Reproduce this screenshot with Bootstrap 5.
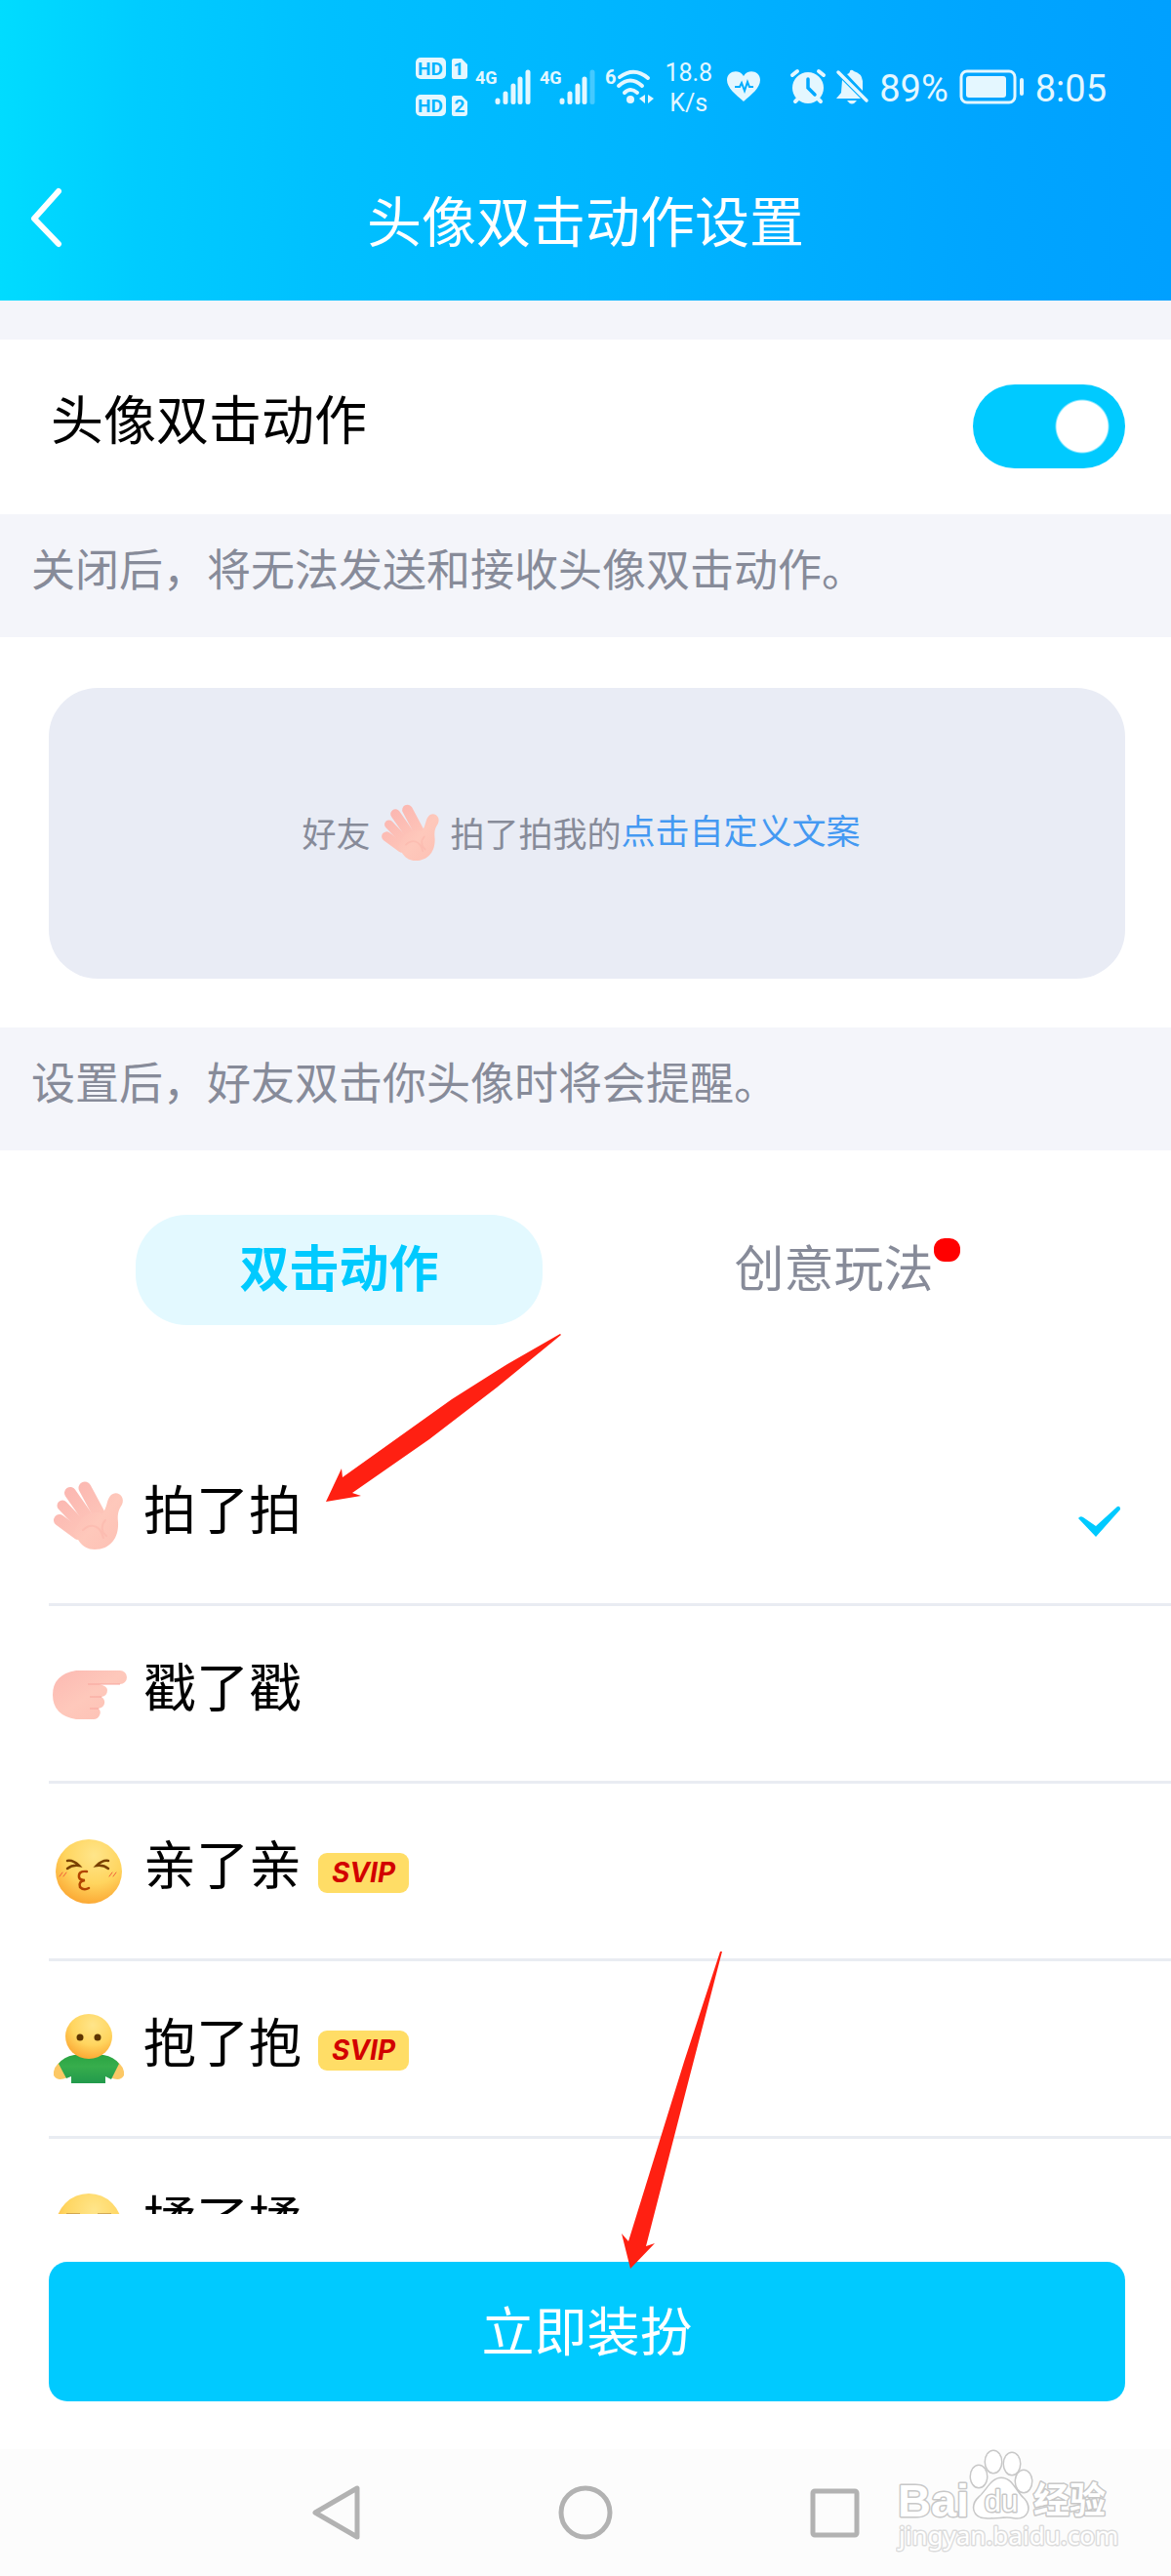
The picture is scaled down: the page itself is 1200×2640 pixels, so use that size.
<!DOCTYPE html>
<html lang="zh-CN">
<head>
<meta charset="utf-8">
<meta name="viewport" content="width=device-width, initial-scale=1">
<title>头像双击动作设置</title>
<link href="https://cdn.jsdelivr.net/npm/bootstrap@5.3.0/dist/css/bootstrap.min.css" rel="stylesheet">
<style>
  body { font-family: Roboto, "Noto Sans CJK SC", sans-serif; color: #000; background: #fff; }
  .app-head { background: linear-gradient(91deg, #00dcff 0%, #00ccff 12%, #00c0ff 28%, #00b4ff 56%, #00a5ff 84%, #00a0ff 100%); color: #fff; padding-bottom: 36px; }
  .status-row { height: 176px; padding: 2px 66px 0 0; gap: 11px; color: #e4f7ff; font-size: 38px; line-height: 48px; }
  .status-row svg { flex: none; overflow: visible; }
  .status-text { padding-top: 4px; }
  .net-speed { padding-top: 2px; font-size: 25px; line-height: 31px; }
  .title-row { height: 96px; }
  .title-row h1 { padding-top: 9px; font-size: 56px; line-height: 60px; font-weight: 400; }
  .back-link { left: 30px; top: 16px; line-height: 0; }
  .soft-band { background: #f4f5fa; }
  .spacer-band { height: 40px; }
  .note-band { padding: 32px 32px 40px; font-size: 45px; line-height: 54px; color: #878b99; }
  .setting-row { padding: 46px 47px 47px 52px; }
  .item-label { font-size: 54px; line-height: 64px; padding-bottom: 8px; }
  .form-check-input.big-switch { width: 156px; height: 86px; margin: 0; border: 0; border-radius: 43px; background: #ccc radial-gradient(circle at 43px 43px, #fff 26px, transparent 28px); box-shadow: none; }
  .form-check-input.big-switch:checked { background: #00caff radial-gradient(circle at 112px 43px, #fff 26px, transparent 28px); }
  .preview-wrap { padding: 52px 47px 50px 50px; }
  .preview-box { height: 298px; border-radius: 50px; background: #e9ecf5; color: #878b99; font-size: 35px; line-height: 44px; padding-right: 12px; }
  .preview-box span { padding-top: 6px; }
  .preview-box a { color: #4499f2; }
  .preview-hand { width: 82px; height: 82px; }
  .tab-strip { padding: 66px 137px 106px 139px; }
  .tab-pill { width: 417px; height: 113px; border: 0; border-radius: 52px; background: transparent; color: #878b99; font-size: 51px; line-height: 60px; padding: 0; }
  .tab-pill.active { background: #e3f9ff; color: #00caff; font-weight: 700; }
  .tab-dot { left: 100%; top: -3px; width: 27px; height: 24px; border-radius: 11px; background: #f00; }
  .action-list { height: 805px; margin-left: 50px; overflow: hidden; }
  .action-row { height: 182px; border-bottom: 3px solid #e9ecf2; padding-right: 51px; gap: 17px; cursor: pointer; }
  .action-row svg { flex: none; }
  .svip { width: 93px; height: 41px; margin-top: 3px; border-radius: 9px; background: #ffdd66; color: #d20000; font: italic 700 28px/41px Inter, sans-serif; }
  .tick { display: none; margin-top: 12px; }
  .action-row input:checked ~ .tick { display: block; }
  .apply-wrap { padding: 49px 47px 49px 50px; }
  .apply-btn { height: 143px; border: 0; border-radius: 19px; background: #00caff; color: #fff; font-size: 54px; line-height: 64px; padding: 4px 0 0; }
  .nav-keys { height: 130px; background: #fcfcfc; gap: 195px; }
  .nav-keys button { width: 60px; height: 60px; padding: 0; border: 0; background: none; line-height: 0; }
  .watermark { right: 52px; top: -2px; }
  .pointer { pointer-events: none; }
  .pointer-a { left: 330px; top: 184px; }
  .pointer-b { left: 634px; top: 816px; }
</style>
<script src="https://cdn.jsdelivr.net/npm/bootstrap@5.3.0/dist/js/bootstrap.bundle.min.js"></script>
</head>
<body>

<svg width="0" height="0" class="position-absolute" aria-hidden="true">
  <defs>
    <linearGradient id="skin" x1="0" y1="0" x2="1" y2="1"><stop offset="0" stop-color="#fcb9b2"/><stop offset=".5" stop-color="#fec8bb"/><stop offset="1" stop-color="#fdc0b4"/></linearGradient>
    <linearGradient id="finger" gradientUnits="userSpaceOnUse" x1="20" y1="20" x2="60" y2="65"><stop offset="0" stop-color="#fbb5b0"/><stop offset="1" stop-color="#fec7ba"/></linearGradient>
    <radialGradient id="face" cx=".58" cy=".25" r=".8"><stop offset="0" stop-color="#ffe58a"/><stop offset=".55" stop-color="#ffd55f"/><stop offset="1" stop-color="#fba32f"/></radialGradient>
    <linearGradient id="shirt" x1="0" y1="0" x2="0" y2="1"><stop offset="0" stop-color="#2aa443"/><stop offset=".4" stop-color="#37ad4c"/><stop offset="1" stop-color="#229a4c"/></linearGradient>
    <symbol id="hand" viewBox="10 10 80 80">
      <g stroke="url(#finger)" stroke-linecap="round" fill="none">
        <path d="M21 54 40 68" stroke-width="12"/>
        <path d="M24 39 46 62" stroke-width="11"/>
        <path d="M32 26 53 56" stroke-width="12"/>
        <path d="M47 21 62 49" stroke-width="13"/>
      </g>
      <path d="M35 67C40 72 43 84 57 84C73 84 82 72 81 56C80 46 82 43 85 38C89 29 79 22 73 29C69 34 70 41 65 47C58 45 50 46 43 53Z" fill="url(#skin)"/>
      <path d="M45 64C54 56 63 60 66 72M68 54C64 58 63 65 69 70" fill="none" stroke="#f9aea5" stroke-width="2" opacity=".4" stroke-linecap="round"/>
    </symbol>
  </defs>
</svg>

<header class="app-head">
  <div class="status-row d-flex align-items-center justify-content-end">
    <svg width="52" height="60" viewBox="0 0 52 60" fill="#e4f7ff" aria-label="HD 1 HD 2">
      <rect width="31" height="22" rx="5"/><rect y="38" width="31" height="22" rx="5"/>
      <path d="M39 1h8l6 6v12a3 3 0 0 1-3 3H39a2 2 0 0 1-2-2V3a2 2 0 0 1 2-2ZM39 39h8l6 6v12a3 3 0 0 1-3 3H39a2 2 0 0 1-2-2V41a2 2 0 0 1 2-2Z"/>
      <g fill="#00b4ff" font-family="Roboto, sans-serif" font-weight="700" font-size="19" text-anchor="middle">
        <text x="15" y="18">HD</text><text x="15" y="56">HD</text><text x="44" y="18">1</text><text x="45" y="56">2</text>
      </g>
    </svg>
    <svg width="55" height="36" viewBox="0 0 55 36" fill="#e4f7ff" stroke="#e4f7ff" aria-label="4G">
      <text x="-2" y="15" font-family="Roboto, sans-serif" font-weight="700" font-size="18" stroke="none">4G</text>
      <path d="M21 32v1.500M29 25v8.500M37 17v16.500M44 10v23.500M52 3v30.500" stroke-width="5" stroke-linecap="round"/>
    </svg>
    <svg width="55" height="36" viewBox="0 0 55 36" fill="#e4f7ff" stroke="#e4f7ff" aria-label="4G">
      <text x="-2" y="15" font-family="Roboto, sans-serif" font-weight="700" font-size="18" stroke="none">4G</text>
      <path d="M21 32v1.500M29 25v8.500M37 17v16.500M44 10v23.500" stroke-width="5" stroke-linecap="round"/>
      <path d="M52 3v30.500" stroke-width="5" stroke-linecap="round" opacity=".3"/>
    </svg>
    <svg width="49" height="36" viewBox="0 0 49 36" fill="#e4f7ff" aria-label="Wi-Fi 6">
      <text x="-1" y="15" font-family="Roboto, sans-serif" font-weight="700" font-size="20">6</text>
      <g fill="none" stroke="#e4f7ff" stroke-width="4" stroke-linecap="round"><path d="M14 8Q29-3 43 9M13 17Q25 6 37 17M19 24Q25 18 32 24"/></g>
      <circle cx="25" cy="31" r="4"/><path d="M40 26v9l-6-5ZM43 26v9l6-5Z"/>
    </svg>
    <div class="net-speed text-center">18.8<br>K/s</div>
    <svg class="mx-1" width="34" height="32" viewBox="0 0 34 32" aria-hidden="true">
      <path d="M17 31C9 24 0 17 0 9C0 0 12-3 17 5C22-3 34 0 34 9C34 17 25 24 17 31Z" fill="#e4f7ff"/>
      <path d="M8 16h5l2-4 3 8 3-9 2 5h4" fill="none" stroke="#00adff" stroke-width="2"/>
    </svg>
    <svg class="ms-3" width="36" height="36" viewBox="0 0 36 36" aria-hidden="true">
      <circle cx="18" cy="19" r="16" fill="#e4f7ff"/>
      <path d="M2 6l5-4M34 6l-5-4M5 33l5-5M31 33l-5-5" stroke="#e4f7ff" stroke-width="4" stroke-linecap="round"/>
      <path d="M18 10v9l7 7" stroke="#00a8ff" stroke-width="3.500" fill="none" stroke-linecap="round"/>
    </svg>
    <svg width="33" height="36" viewBox="0 0 33 36" aria-hidden="true">
      <path d="M11 5Q14 4 14 1.500Q16 0 18 2Q26 4 27 12V22ZM6 11 25 30H0L5 24ZM11 32h10q-5 7-10 0Z" fill="#e4f7ff"/>
      <path d="M2 3 31 32" stroke="#e4f7ff" stroke-width="3.500" stroke-linecap="round"/>
    </svg>
    <span class="status-text">89%</span>
    <svg width="67" height="36" viewBox="0 0 67 36" aria-hidden="true">
      <rect x="2" y="2" width="55" height="32" rx="6" fill="none" stroke="#e4f7ff" stroke-width="3"/>
      <rect x="7" y="7" width="41" height="22" rx="3" fill="#e4f7ff"/><rect x="62" y="9" width="4" height="18" rx="2" fill="#e4f7ff"/>
    </svg>
    <time class="status-text">8:05</time>
  </div>
  <div class="title-row position-relative d-flex align-items-center justify-content-center">
    <a href="#" class="back-link position-absolute" aria-label="返回">
      <svg width="36" height="62" viewBox="0 0 36 62"><path d="M30 4 5 32 30 58" fill="none" stroke="#fff" stroke-width="6" stroke-linecap="round" stroke-linejoin="round"/></svg>
    </a>
    <h1 class="mb-0">头像双击动作设置</h1>
  </div>
</header>

<main>
  <div class="soft-band spacer-band"></div>
  <section class="setting-row d-flex align-items-center justify-content-between">
    <label class="item-label" for="tapSwitch">头像双击动作</label>
    <input class="form-check-input big-switch" type="checkbox" role="switch" id="tapSwitch" checked>
  </section>
  <p class="soft-band note-band m-0">关闭后，将无法发送和接收头像双击动作。</p>

  <section class="preview-wrap">
    <div class="preview-box d-flex align-items-center justify-content-center">
      <span>好友</span>
      <svg class="preview-hand" aria-hidden="true"><use href="#hand" x="8" y="8" width="66" height="66"/></svg>
      <span>拍了拍我的</span><a href="#" class="text-decoration-none">点击自定义文案</a>
    </div>
  </section>
  <p class="soft-band note-band m-0">设置后，好友双击你头像时将会提醒。</p>

  <section class="position-relative">
    <div class="tab-strip d-flex justify-content-between" role="tablist">
      <button class="tab-pill active" type="button" role="tab" aria-selected="true">双击动作</button>
      <button class="tab-pill" type="button" role="tab" aria-selected="false"><span class="position-relative">创意玩法<span class="tab-dot position-absolute"></span></span></button>
    </div>

    <div class="action-list">
      <label class="action-row d-flex align-items-center">
        <input class="visually-hidden" type="radio" name="tapAction" checked>
        <svg width="80" height="80"><use href="#hand" width="80" height="80"/></svg>
        <span class="item-label">拍了拍</span>
        <svg class="tick ms-auto" width="44" height="34" viewBox="0 0 44 34"><path d="M0 13Q2 10 5 12L18 21 40 1Q43 0 43 4L18 32Z" fill="#00caff"/></svg>
      </label>
      <label class="action-row d-flex align-items-center">
        <input class="visually-hidden" type="radio" name="tapAction">
        <svg width="80" height="80" viewBox="0 0 80 80">
          <path d="M28 16H73a7 7 0 0 1 0 14H52Q60 32 60 36Q60 42 54 43Q58 46 57 50Q56 54 51 55Q54 58 52 62Q50 66 46 66H28Q4 62 4 41Q4 20 28 16Z" fill="url(#skin)"/>
          <path d="M73 30H40M54 43H42M51 55H42" stroke="#f9a8a0" stroke-width="1.500" opacity=".7"/>
        </svg>
        <span class="item-label">戳了戳</span>
        <svg class="tick ms-auto" width="44" height="34" viewBox="0 0 44 34"><path d="M0 13Q2 10 5 12L18 21 40 1Q43 0 43 4L18 32Z" fill="#00caff"/></svg>
      </label>
      <label class="action-row d-flex align-items-center">
        <input class="visually-hidden" type="radio" name="tapAction">
        <svg width="80" height="80" viewBox="0 0 80 80" fill="none" stroke-linecap="round">
          <ellipse cx="41" cy="40" rx="34" ry="33" fill="url(#face)"/>
          <path d="M19 29Q25 28 31 34Q24 33 19 37M61 29Q55 28 49 34Q56 33 61 37" stroke="#7a4100" stroke-width="2.500"/>
          <path d="M39 40Q30 39 31 46Q32 49 37 49Q30 50 32 56Q36 60 41 57" stroke="#b14400" stroke-width="2.500"/>
          <path d="M11 45l3-4M15 45l3-4M62 45l3-4M66 45l3-4" stroke="#f0603c" stroke-width="1"/>
        </svg>
        <span class="item-label">亲了亲</span>
        <span class="svip text-center">SVIP</span>
        <svg class="tick ms-auto" width="44" height="34" viewBox="0 0 44 34"><path d="M0 13Q2 10 5 12L18 21 40 1Q43 0 43 4L18 32Z" fill="#00caff"/></svg>
      </label>
      <label class="action-row d-flex align-items-center">
        <input class="visually-hidden" type="radio" name="tapAction">
        <svg width="80" height="80" viewBox="0 0 80 80">
          <path d="M13 52Q4 58 5 67Q9 74 19 69ZM69 52Q78 58 77 67Q73 74 63 69Z" fill="#fcc865"/>
          <path d="M26 46H56Q67 48 72 55L64 71 58 68V75H23V68L18 70 10 55Q15 48 26 46Z" fill="url(#shirt)"/>
          <ellipse cx="41" cy="27" rx="24" ry="23" fill="url(#face)"/>
          <circle cx="32" cy="28" r="3.500" fill="#5e3500"/><circle cx="50" cy="28" r="3.500" fill="#5e3500"/>
        </svg>
        <span class="item-label">抱了抱</span>
        <span class="svip text-center">SVIP</span>
        <svg class="tick ms-auto" width="44" height="34" viewBox="0 0 44 34"><path d="M0 13Q2 10 5 12L18 21 40 1Q43 0 43 4L18 32Z" fill="#00caff"/></svg>
      </label>
      <label class="action-row d-flex align-items-center">
        <input class="visually-hidden" type="radio" name="tapAction">
        <svg width="80" height="80" viewBox="0 0 80 80">
          <ellipse cx="41" cy="40" rx="34" ry="34" fill="url(#face)"/>
          <path d="M18 28h14M50 28h14" stroke="#a87431" stroke-width="3"/>
        </svg>
        <span class="item-label">揉了揉</span>
      </label>
    </div>

    <div class="apply-wrap">
      <button class="apply-btn btn w-100" type="button">立即装扮</button>
    </div>

    <svg class="pointer pointer-a position-absolute" width="250" height="180" viewBox="0 0 250 180" aria-hidden="true">
      <path d="M244 4 190 35 133 71 21 151 20 142 4 176 40 170 31 167 110 112 179 59 245 5Z" fill="#ff2012"/>
    </svg>
    <svg class="pointer pointer-b position-absolute" width="110" height="336" viewBox="0 0 110 336" aria-hidden="true">
      <path d="M104 5 67 118 10 302 3 294 12 330 37 304 28 307 73 132 106 5Z" fill="#ff2012"/>
    </svg>
  </section>
</main>

<nav class="nav-keys position-relative d-flex align-items-center justify-content-center">
  <button type="button" aria-label="返回"><svg width="60" height="60" fill="none" stroke="#b2b2b2" stroke-width="5" stroke-linejoin="round"><path d="M51 5V55L8 30Z"/></svg></button>
  <button type="button" aria-label="主页"><svg width="60" height="60" fill="none" stroke="#b2b2b2" stroke-width="5"><circle cx="30" cy="30" r="25"/></svg></button>
  <button type="button" aria-label="最近任务"><svg width="60" height="60" fill="none" stroke="#b2b2b2" stroke-width="5"><rect x="8" y="8" width="45" height="45" rx="2"/></svg></button>
  <svg class="watermark position-absolute" width="230" height="110" viewBox="0 0 230 110" fill="#fff" stroke="#c8c8c8" stroke-width="3" paint-order="stroke" stroke-linejoin="round" role="img" aria-label="Baidu 经验">
    <g font-family="'Liberation Sans', sans-serif" font-weight="700">
      <text x="2" y="71" font-size="47">Bai</text>
      <text x="141" y="68" font-size="37" font-family="'Noto Sans CJK SC', sans-serif">经验</text>
    </g>
    <g stroke-width="3">
      <ellipse cx="85" cy="30" rx="8" ry="11"/><ellipse cx="100" cy="15" rx="8" ry="11"/><ellipse cx="119" cy="17" rx="8" ry="11"/><ellipse cx="131" cy="35" rx="8" ry="11"/>
      <path d="M108 32C98 32 94 44 86 51C76 60 80 72 92 72C102 73 113 70 121 72C135 74 139 62 131 53C122 45 119 32 108 32Z"/>
    </g>
    <text x="108" y="66" font-size="31" text-anchor="middle" font-family="'Liberation Sans', sans-serif">du</text>
    <text x="3" y="100" font-size="26" font-family="'Noto Sans', sans-serif" stroke="#dcdcdc">jingyan.baidu.com</text>
  </svg>
</nav>
</body>
</html>
